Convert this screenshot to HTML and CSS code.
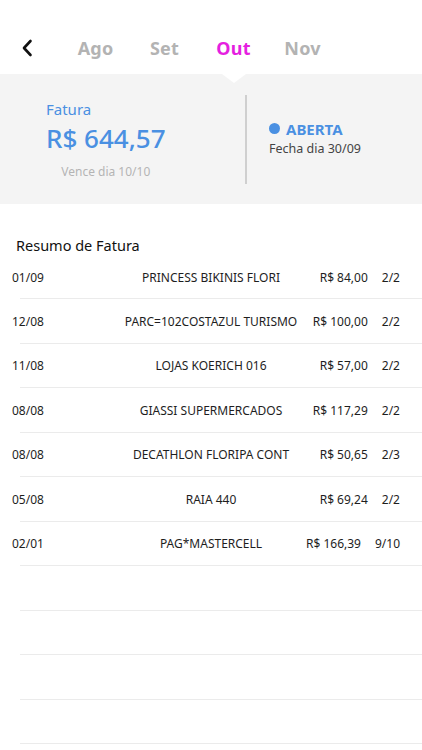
FILE: index.html
```html
<!DOCTYPE html>
<html lang="pt-BR">
<head>
<meta charset="utf-8">
<link rel="stylesheet" href="styles.css">
</head>
<body>
<div class="screen">
  <header class="topbar">
    <span class="back">
      <svg width="12" height="18" viewBox="0 0 12 18"><path d="M9.5 2 L3 9 L9.5 16" fill="none" stroke="#111" stroke-width="2.6" stroke-linecap="round" stroke-linejoin="round"/></svg>
    </span>
    <nav class="months">
      <span class="month">Ago</span>
      <span class="month">Set</span>
      <span class="month active">Out</span>
      <span class="month">Nov</span>
    </nav>
  </header>
  <section class="summary">
    <div class="left">
      <div class="invoice">
        <span class="label">Fatura</span>
        <span class="amount">R$ 644,57</span>
        <span class="due">Vence dia 10/10</span>
      </div>
    </div>
    <div class="divider"></div>
    <div class="right">
      <div class="status"><span class="dot"></span>ABERTA</div>
      <div class="closes">Fecha dia 30/09</div>
    </div>
  </section>
  <h2 class="title">Resumo de Fatura</h2>
  <ul class="list">
    <li class="row"><span class="date">01/09</span><span class="desc">PRINCESS BIKINIS FLORI</span><span class="val"><span>R$ 84,00</span><span>2/2</span></span></li>
    <li class="row"><span class="date">12/08</span><span class="desc">PARC=102COSTAZUL TURISMO</span><span class="val"><span>R$ 100,00</span><span>2/2</span></span></li>
    <li class="row"><span class="date">11/08</span><span class="desc">LOJAS KOERICH 016</span><span class="val"><span>R$ 57,00</span><span>2/2</span></span></li>
    <li class="row"><span class="date">08/08</span><span class="desc">GIASSI SUPERMERCADOS</span><span class="val"><span>R$ 117,29</span><span>2/2</span></span></li>
    <li class="row"><span class="date">08/08</span><span class="desc">DECATHLON FLORIPA CONT</span><span class="val"><span>R$ 50,65</span><span>2/3</span></span></li>
    <li class="row"><span class="date">05/08</span><span class="desc">RAIA 440</span><span class="val"><span>R$ 69,24</span><span>2/2</span></span></li>
    <li class="row"><span class="date">02/01</span><span class="desc">PAG*MASTERCELL</span><span class="val"><span>R$ 166,39</span><span>9/10</span></span></li>
    <li class="row empty"></li>
    <li class="row empty"></li>
    <li class="row empty"></li>
    <li class="row empty"></li>
  </ul>
</div>
</body>
</html>
```
FILE: styles.css
```css
* { box-sizing: border-box; }
html, body { margin: 0; padding: 0; background: #fff; }
body { font-family: "Noto Sans", "DejaVu Sans", sans-serif; color: #222; }
.screen { width: 422px; height: 750px; overflow: hidden; }

.topbar { height: 74px; display: flex; align-items: center; padding: 22px 0 0 21px; }
.back { width: 40px; display: flex; align-items: center; }
.back svg { display: block; }
.months { display: flex; }
.month { width: 69px; text-align: center; font-size: 18px; font-weight: 700; color: #b3b3b3; letter-spacing: 0.2px; }
.month.active { color: #e51fe0; }

.summary { position: relative; height: 130px; background: #f4f4f4; display: flex; align-items: center; }
.summary::before { content: ""; position: absolute; top: 0; left: 222px; border-left: 12px solid transparent; border-right: 12px solid transparent; border-top: 9px solid #fff; }
.left { width: 245px; padding-left: 46px; }
.invoice { display: inline-flex; flex-direction: column; align-items: center; }
.label { align-self: flex-start; font-size: 15px; color: #4a90e2; line-height: 20px; }
.amount { font-size: 26px; font-weight: 500; color: #4a90e2; line-height: 36px; margin-top: 1px; }
.due { font-size: 12px; color: #b4b4b4; line-height: 18px; margin-top: 7px; }
.divider { width: 2px; height: 89px; background: #cfcfcf; }
.right { padding-left: 22px; margin-top: -2px; }
.status { display: flex; align-items: center; font-size: 15px; font-weight: 700; color: #4a90e2; line-height: 20px; }
.dot { width: 11px; height: 11px; border-radius: 50%; background: #4a90e2; margin-right: 6px; }
.closes { font-size: 12.5px; color: #444; line-height: 18px; margin-top: 1px; }

.title { margin: 0; padding: 31px 0 0 16px; font-size: 14.5px; font-weight: 400; color: #111; line-height: 20px; }
.list { list-style: none; margin: 0; padding: 0; }
.row { height: 44.5px; display: grid; grid-template-columns: 1fr auto 1fr; align-items: center; padding: 0 12px; position: relative; font-size: 12px; color: #1e1e1e; }
.row::after { content: ""; position: absolute; left: 20px; right: 0; bottom: 0; height: 1px; background: #ebebeb; }
.row:first-child { height: 44px; }
.date { justify-self: start; }
.desc { text-align: center; white-space: nowrap; }
.val { justify-self: end; display: flex; gap: 14px; white-space: nowrap; margin-right: 10px; }
```
